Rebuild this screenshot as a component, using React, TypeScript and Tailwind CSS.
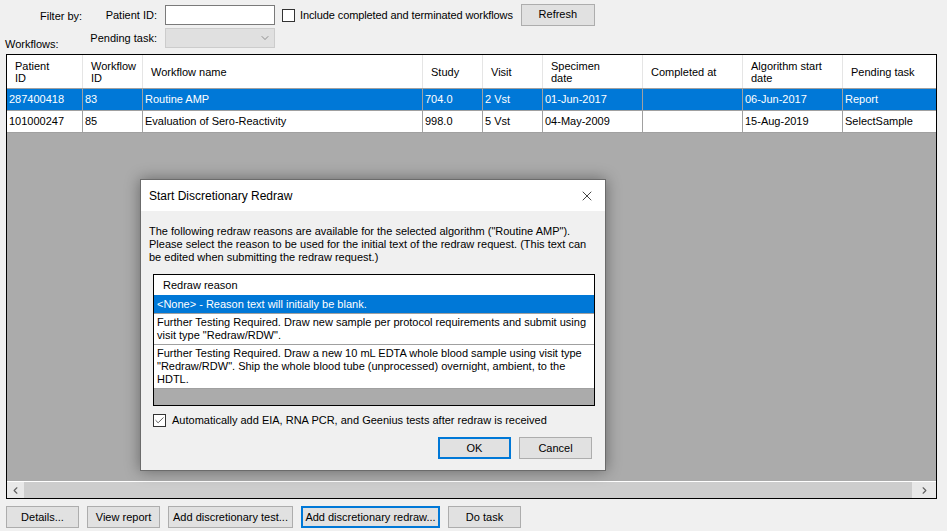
import { X, ChevronDown, ChevronLeft, ChevronRight, Check } from 'lucide-react'

const COLUMNS = [
  { key: 'pid', title: ['Patient', 'ID'], w: 'w-[76px]' },
  { key: 'wid', title: ['Workflow', 'ID'], w: 'w-[60px]' },
  { key: 'name', title: ['Workflow name'], w: 'w-[280px]' },
  { key: 'study', title: ['Study'], w: 'w-[60px]' },
  { key: 'visit', title: ['Visit'], w: 'w-[60px]' },
  { key: 'spec', title: ['Specimen', 'date'], w: 'w-[100px]' },
  { key: 'done', title: ['Completed at'], w: 'w-[100px]' },
  { key: 'algo', title: ['Algorithm start', 'date'], w: 'w-[100px]' },
  { key: 'task', title: ['Pending task'], w: 'w-[93px]' },
]

const ROWS = [
  ['287400418', '83', 'Routine AMP', '704.0', '2 Vst', '01-Jun-2017', '', '06-Jun-2017', 'Report'],
  ['101000247', '85', 'Evaluation of Sero-Reactivity', '998.0', '5 Vst', '04-May-2009', '', '15-Aug-2019', 'SelectSample'],
]

const REASONS = [
  '<None> - Reason text will initially be blank.',
  'Further Testing Required. Draw new sample per protocol requirements and submit using visit type "Redraw/RDW".',
  'Further Testing Required. Draw a new 10 mL EDTA whole blood sample using visit type "Redraw/RDW". Ship the whole blood tube (unprocessed) overnight, ambient, to the HDTL.',
]

function WinButton({ label, w, focused }: { label: string; w: string; focused?: boolean }) {
  return (
    <div
      className={
        'h-[22px] flex items-center justify-center bg-[#e1e1e1] ' +
        w +
        (focused ? ' border-2 border-[#0078d7]' : ' border border-[#adadad]')
      }
    >
      {label}
    </div>
  )
}

function CheckBox({ checked }: { checked?: boolean }) {
  return (
    <div className="w-[13px] h-[13px] border border-[#333] bg-white flex items-center justify-center">
      {checked && <Check size={11} strokeWidth={1.6} className="text-[#222]" />}
    </div>
  )
}

export default function App() {
  return (
    <div className="w-[947px] h-[531px] bg-[#f0f0f0] relative overflow-hidden text-[11px] text-black font-['Liberation_Sans',Arial,sans-serif] flex flex-col">
      {/* Filter area */}
      <div className="h-[54px] flex">
        <div className="w-[88px] flex flex-col justify-between">
          <div className="pl-[40px] pt-[8px]">Filter by:</div>
          <div className="pl-[5px] pb-[2px]">Workflows:</div>
        </div>
        <div className="flex flex-col pt-[5px] gap-[3px]">
          <div className="flex items-center h-[20px]">
            <div className="w-[77px] text-right pr-[8px]">Patient ID:</div>
            <div className="w-[110px] h-[20px] bg-white border border-[#7a7a7a]" />
            <div className="ml-[7px]">
              <CheckBox />
            </div>
            <div className="ml-[5px] tracking-[-0.1px]">Include completed and terminated workflows</div>
            <div className="ml-[8px] -mt-[1px]">
              <WinButton label="Refresh" w="w-[74px]" />
            </div>
          </div>
          <div className="flex items-center h-[20px]">
            <div className="w-[77px] text-right pr-[8px]">Pending task:</div>
            <div className="w-[110px] h-[20px] bg-[#e0e0e0] border border-[#cccccc] flex items-center justify-end pr-[3px]">
              <ChevronDown size={12} strokeWidth={1.2} className="text-[#555]" />
            </div>
          </div>
        </div>
      </div>

      {/* Workflows grid */}
      <div className="ml-[6px] w-[931px] h-[445px] border border-black bg-[#ababab] flex flex-col">
        <div className="flex bg-white h-[34px] border-b border-[#a0a0a0]">
          {COLUMNS.map((c, i) => (
            <div
              key={c.key}
              className={
                c.w +
                ' shrink-0 flex flex-col justify-center leading-[12px] pl-[8px] ' +
                (i < COLUMNS.length - 1 ? 'border-r border-[#e5e5e5]' : '')
              }
            >
              {c.title.map((t) => (
                <span key={t}>{t}</span>
              ))}
            </div>
          ))}
        </div>
        {ROWS.map((r, ri) => (
          <div
            key={ri}
            className={
              'flex h-[22px] border-b border-[#a0a0a0] ' +
              (ri === 0 ? 'bg-[#0078d7] text-white' : 'bg-white')
            }
          >
            {r.map((v, i) => (
              <div
                key={i}
                className={
                  COLUMNS[i].w +
                  ' shrink-0 flex items-center pl-[2px] whitespace-nowrap overflow-hidden ' +
                  (i < r.length - 1 ? 'border-r border-[#a0a0a0]' : '')
                }
              >
                {v}
              </div>
            ))}
          </div>
        ))}
        <div className="flex-1" />
        <div className="h-[17px] border-t border-white flex bg-[#e8e8e8]">
          <div className="w-[17px] flex items-center justify-center">
            <ChevronLeft size={11} strokeWidth={2.5} className="text-[#606060]" />
          </div>
          <div className="flex-1 bg-[#cdcdcd]" />
          <div className="w-[24px] flex items-center justify-center">
            <ChevronRight size={11} strokeWidth={2.5} className="text-[#606060]" />
          </div>
        </div>
      </div>

      {/* Bottom buttons */}
      <div className="flex gap-[8px] ml-[6px] mt-[7px]">
        <WinButton label="Details..." w="w-[73px]" />
        <WinButton label="View report" w="w-[73px]" />
        <WinButton label="Add discretionary test..." w="w-[125px]" />
        <WinButton label="Add discretionary redraw..." w="w-[139px]" focused />
        <WinButton label="Do task" w="w-[73px]" />
      </div>

      {/* Dialog */}
      <div className="absolute left-[140px] top-[179px] w-[466px] h-[292px] border border-[#6b6b6b] bg-[#f0f0f0] shadow-[0_0_14px_rgba(0,0,0,0.4)] flex flex-col">
        <div className="h-[31px] bg-white flex items-center justify-between pl-[8px] pr-[10px] text-[12px]">
          <span>Start Discretionary Redraw</span>
          <X size={16} strokeWidth={1.1} className="text-black" />
        </div>
        <div className="flex-1 flex flex-col px-[12px]">
          <p className="pt-[14px] -ml-[4px] leading-[13px] w-[440px]">
            The following redraw reasons are available for the selected algorithm ("Routine AMP"). Please select the
            reason to be used for the initial text of the redraw request. (This text can be edited when submitting the
            redraw request.)
          </p>
          <div className="mt-[10px] w-[442px] h-[132px] border border-black bg-[#ababab] flex flex-col">
            <div className="h-[20px] bg-white flex items-center pl-[9px]">Redraw reason</div>
            {REASONS.map((t, i) => (
              <div
                key={i}
                className={
                  'px-[3px] py-[2px] leading-[13px] border-b border-[#a0a0a0] ' +
                  (i === 0 ? 'bg-[#0078d7] text-white h-[19px] flex items-center' : 'bg-white')
                }
              >
                {t}
              </div>
            ))}
          </div>
          <div className="flex items-center mt-[8px] h-[13px]">
            <CheckBox checked />
            <span className="ml-[6px]">Automatically add EIA, RNA PCR, and Geenius tests after redraw is received</span>
          </div>
          <div className="flex justify-end gap-[8px] mt-[10px] pr-[1px]">
            <WinButton label="OK" w="w-[73px]" focused />
            <WinButton label="Cancel" w="w-[73px]" />
          </div>
        </div>
      </div>
    </div>
  )
}
